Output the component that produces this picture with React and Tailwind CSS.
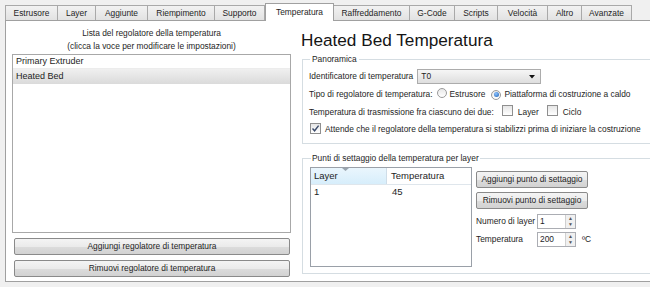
import React from "react";

const tabs = [
  ["Estrusore", "w-[53px]"],
  ["Layer", "w-[38px]"],
  ["Aggiunte", "w-[52px]"],
  ["Riempimento", "w-[67px]"],
  ["Supporto", "w-[50px]"],
  ["Temperatura", "w-[69px]", true],
  ["Raffreddamento", "w-[76px]"],
  ["G-Code", "w-[45px]"],
  ["Scripts", "w-[43px]"],
  ["Velocità", "w-[50px]"],
  ["Altro", "w-[34px]"],
  ["Avanzate", "w-[50px]"],
];

function Radio({ checked }) {
  return (
    <span className="relative inline-flex h-[10px] w-[10px] items-center justify-center rounded-full border border-[#9a9a9a] bg-[linear-gradient(180deg,#e8e8e8,#ffffff)]">
      {checked && <span className="h-[5px] w-[5px] rounded-full bg-[radial-gradient(circle_at_40%_35%,#8fc4ff,#1a5fb4)]" />}
    </span>
  );
}

function Check({ checked }) {
  return (
    <span className="inline-flex h-[11px] w-[11px] items-center justify-center border border-[#8f8f8f] bg-[linear-gradient(180deg,#e6e6e6,#ffffff)]">
      {checked && (
        <svg width="9" height="9" viewBox="0 0 9 9">
          <path d="M1.5 4.5 L3.6 6.8 L7.6 1.6" fill="none" stroke="#3a4a6a" strokeWidth="1.4" />
        </svg>
      )}
    </span>
  );
}

function Spin({ value }) {
  return (
    <div className="flex h-[15px] w-[39px] items-stretch border border-[#abadb3] bg-white">
      <span className="flex-1 pl-[2px] leading-[13px]">{value}</span>
      <div className="flex w-[10px] flex-col border-l border-[#d0d0d0] bg-[#f0f0f0]">
        <span className="flex flex-1 items-center justify-center text-[5px] leading-none text-[#555]">▲</span>
        <span className="flex flex-1 items-center justify-center text-[5px] leading-none text-[#555]">▼</span>
      </div>
    </div>
  );
}

function Btn({ children, className }) {
  return (
    <div className={`flex items-center justify-center rounded-[2px] border border-[#8a8a8a] bg-[linear-gradient(180deg,#f4f4f4_0%,#ebebeb_50%,#dcdcdc_51%,#d2d2d2_100%)] ${className}`}>
      {children}
    </div>
  );
}

export default function App() {
  return (
    <div className="h-[287px] w-[650px] overflow-hidden bg-[#f0f0f0] font-['Liberation_Sans',Arial,sans-serif] text-[8.4px] text-[#1e1e1e]">
      <div className="flex h-[20px] items-end pl-[5px]">
        {tabs.map(([label, w, active]) => (
          <div
            key={label}
            className={
              active
                ? `${w} relative z-10 -mb-px flex h-[18px] items-center justify-center border border-b-0 border-[#a0a0a0] bg-white`
                : `${w} flex h-[15px] items-center justify-center border border-l-0 border-b-0 border-[#a9a9a9] bg-[linear-gradient(180deg,#f2f2f2,#e2e2e2)] first:border-l`
            }
          >
            {label}
          </div>
        ))}
      </div>

      <div className="ml-[5px] flex h-[262px] overflow-hidden border-t border-l border-b border-[#a0a0a0] bg-white">
        <div className="flex w-[291px] shrink-0 flex-col pl-[6px] pt-[6px]">
          <div className="w-[279px] text-center leading-[13px]">
            <div>Lista del regolatore della temperatura</div>
            <div>(clicca la voce per modificare le impostazioni)</div>
          </div>
          <div className="mt-[1px] h-[179px] w-[279px] border border-[#a8a8a8]">
            <div className="flex h-[14px] items-center border-b border-[#ececec] pl-[3px] text-[9px]">Primary Extruder</div>
            <div className="flex h-[15px] items-center bg-[linear-gradient(180deg,#f0f0f0,#dadada)] pl-[3px] text-[9px]">Heated Bed</div>
          </div>
          <Btn className="mt-[5px] ml-[2px] h-[17px] w-[276px]">Aggiungi regolatore di temperatura</Btn>
          <Btn className="mt-[5px] ml-[2px] h-[17px] w-[276px]">Rimuovi regolatore di temperatura</Btn>
        </div>

        <div className="flex min-w-0 flex-1 flex-col pl-[5px]">
          <div className="mt-[6px] h-[26px] -ml-[1px] text-[17.2px] leading-[26px] text-[#151515]">Heated Bed Temperatura</div>

          <fieldset className="mt-[1px] h-[90px] w-[370px] shrink-0 border border-[#d5dde2] pl-[6px]">
            <legend className="ml-[1px] px-[2px] leading-[10px]">Panoramica</legend>
            <div className="mt-[5px] flex h-[15px] items-center gap-[4px]">
              <span>Identificatore di temperatura</span>
              <div className="flex h-[15px] w-[124px] items-center justify-between border border-[#acacac] bg-[linear-gradient(180deg,#f6f6f6,#dedede)] px-[3px]">
                <span>T0</span>
                <svg width="6" height="4" viewBox="0 0 6 4" className="mr-[2px]">
                  <path d="M0 0 H6 L3 3.5 Z" fill="#111" />
                </svg>
              </div>
            </div>
            <div className="mt-[3px] flex h-[15px] items-center">
              <span>Tipo di regolatore di temperatura:</span>
              <span className="ml-[4px]"><Radio /></span>
              <span className="ml-[3px]">Estrusore</span>
              <span className="ml-[6px]"><Radio checked /></span>
              <span className="ml-[3px]">Piattaforma di costruzione a caldo</span>
            </div>
            <div className="mt-[3px] flex h-[15px] items-center">
              <span>Temperatura di trasmissione fra ciascuno dei due:</span>
              <span className="ml-[8px]"><Check /></span>
              <span className="ml-[5px]">Layer</span>
              <span className="ml-[8px]"><Check /></span>
              <span className="ml-[5px]">Ciclo</span>
            </div>
            <div className="mt-[2px] flex h-[15px] items-center">
              <span className="ml-[1px]"><Check checked /></span>
              <span className="ml-[4px]">Attende che il regolatore della temperatura si stabilizzi prima di iniziare la costruzione</span>
            </div>
          </fieldset>

          <fieldset className="mt-[9px] h-[121px] w-[370px] shrink-0 border border-[#d5dde2] pl-[7px]">
            <legend className="ml-[1px] px-[1px] leading-[10px]">Punti di settaggio della temperatura per layer</legend>
            <div className="mt-[4px] flex">
              <div className="h-[100px] w-[162px] border border-[#9aa0a8]">
                <div className="flex h-[17px] border-b border-[#dfe6ec] text-[9.5px]">
                  <div className="relative flex w-[76px] items-center border-r border-[#cfdde8] bg-[linear-gradient(180deg,#eaf6fd,#d7eefb)] pl-[3px]">
                    Layer
                    <svg width="7" height="3" viewBox="0 0 7 3" className="absolute top-0 left-[31px]">
                      <path d="M0 0 H7 L3.5 3 Z" fill="#9aa4ae" />
                    </svg>
                  </div>
                  <div className="flex flex-1 items-center pl-[4px]">Temperatura</div>
                </div>
                <div className="flex h-[15px] items-center text-[9.5px]">
                  <div className="w-[76px] pl-[3px]">1</div>
                  <div className="pl-[5px]">45</div>
                </div>
              </div>
              <div className="ml-[4px] flex flex-col">
                <Btn className="mt-[4px] h-[17px] w-[112px]">Aggiungi punto di settaggio</Btn>
                <Btn className="mt-[4px] h-[17px] w-[112px]">Rimuovi punto di settaggio</Btn>
                <div className="mt-[5px] flex h-[15px] items-center">
                  <span className="w-[61px]">Numero di layer</span>
                  <Spin value="1" />
                </div>
                <div className="mt-[3px] flex h-[15px] items-center">
                  <span className="w-[61px]">Temperatura</span>
                  <Spin value="200" />
                  <span className="ml-[6px]">ºC</span>
                </div>
              </div>
            </div>
          </fieldset>
        </div>
      </div>
    </div>
  );
}
